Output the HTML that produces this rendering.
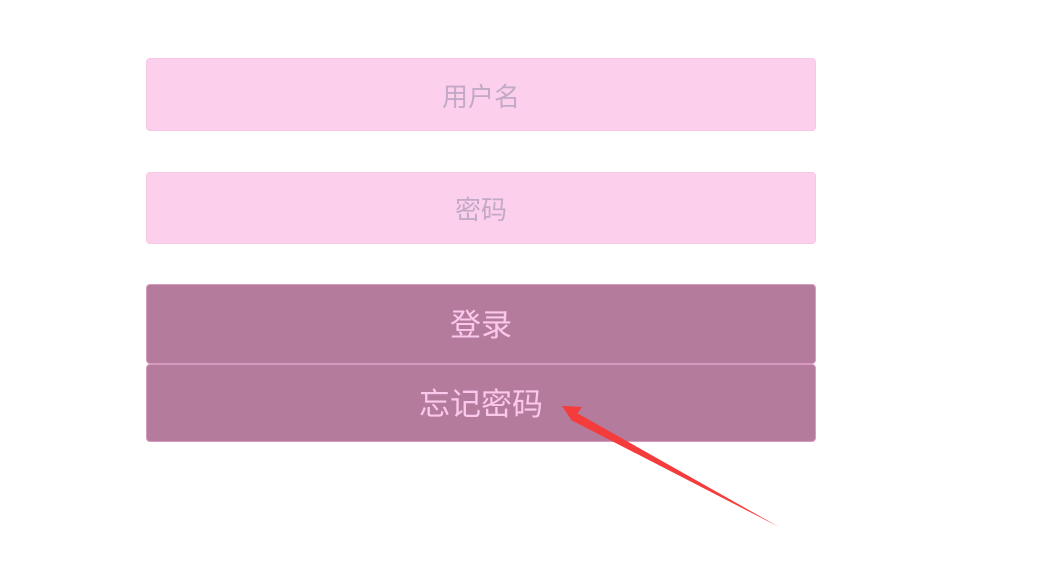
<!DOCTYPE html>
<html><head><meta charset="utf-8"><style>
body{margin:0;width:1060px;height:580px;background:#fff;position:relative;overflow:hidden;font-family:"Liberation Sans","Noto Sans CJK SC",sans-serif}
.b{position:absolute;left:146px;width:670px;box-sizing:border-box;border-radius:4px;text-align:center}
.in{background:#fcd0ec;border:1px solid #f9c6e6;color:#c3a9c8;font-size:26px}
.bt{background:#b47b9d;border:1px solid #d79ac0;color:#fac8ec;font-size:31px}
</style></head><body>
<div class="b in" style="top:58px;height:73px;line-height:76px">用户名</div>
<div class="b in" style="top:172px;height:72px;line-height:75px">密码</div>
<div class="b bt" style="top:284px;height:80px;line-height:82px">登录</div>
<div class="b bt" style="top:364px;height:78px;line-height:80px">忘记密码</div>
<svg style="position:absolute;left:0;top:0" width="1060" height="580"><polygon points="562,406 581,407 577,413 779,527 571,420 573,419" fill="#f43c3c"/><polygon points="562,406 582,407 572,421" fill="#f43c3c"/></svg>
</body></html>
